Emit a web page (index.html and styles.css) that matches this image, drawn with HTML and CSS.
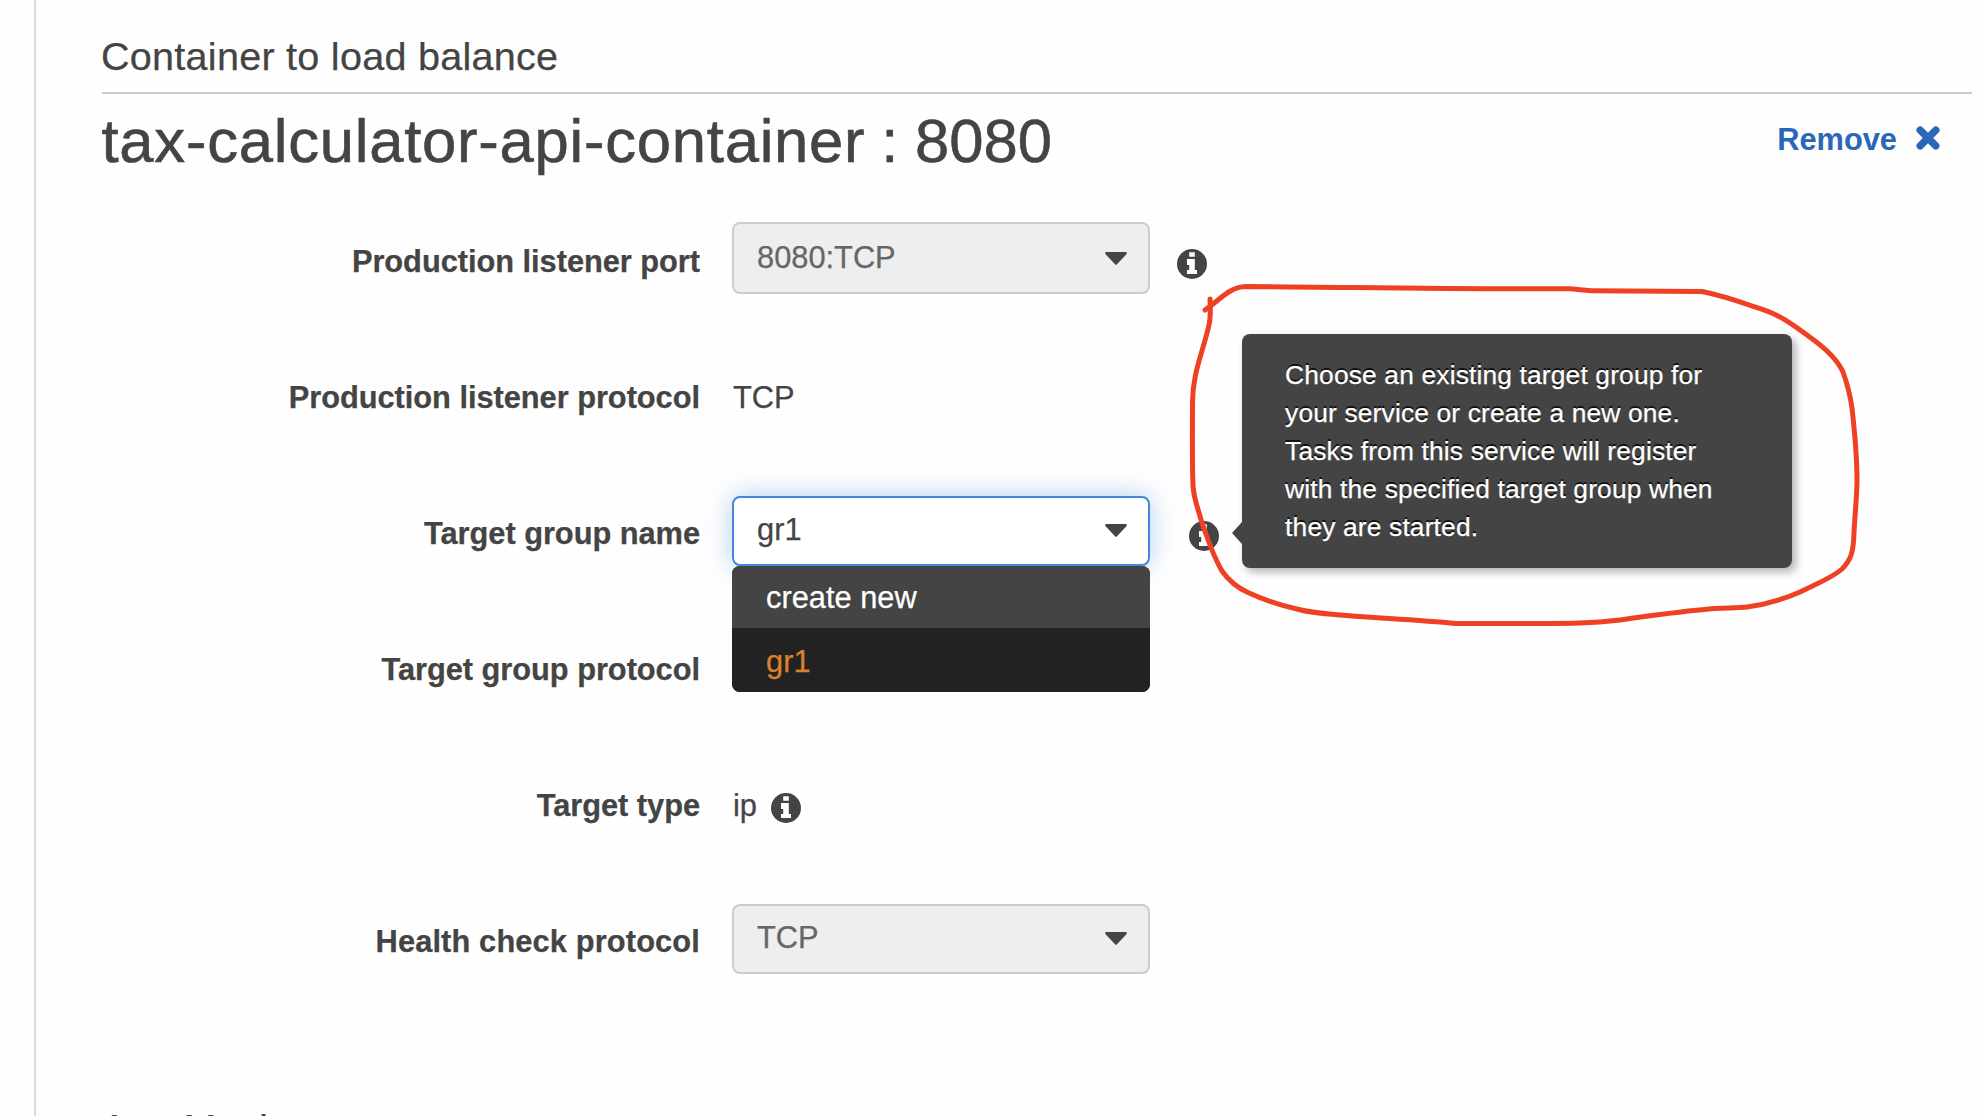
FILE: index.html
```
<!DOCTYPE html>
<html lang="en">
<head>
<meta charset="utf-8">
<title>Container to load balance</title>
<link rel="stylesheet" href="styles.css">
</head>
<body>
<svg class="defs" width="0" height="0" aria-hidden="true">
  <symbol id="info" viewBox="0 0 30 30">
    <circle cx="15" cy="15" r="15" fill="#444"/>
    <path fill="#fff" d="M12.2 3.2h5.6v4.6h-5.6zM10 10h7.8v11H20v4H10v-4h2.2v-5H10z"/>
  </symbol>
  <symbol id="caret" viewBox="0 0 22 13">
    <path fill="#444" d="M1.2 0h19.6q1.8.6.6 2.2L12 12.2q-1 1-2 0L.6 2.2Q-.6.6 1.2 0z"/>
  </symbol>
</svg>
<main class="panel">
  <h2 class="section-title">Container to load balance</h2>
  <div class="container-head">
    <h1 class="container-name">tax-calculator-api-container : <span class="port">8080</span></h1>
    <a class="remove">Remove
      <svg class="cross" viewBox="0 0 24 24"><path d="M4.2 4.2l15.6 15.6M19.8 4.2L4.2 19.8" stroke="#2b67b8" stroke-width="7.4" stroke-linecap="round"/></svg>
    </a>
  </div>
  <div class="form">
    <div class="row">
      <label class="label">Production listener port</label>
      <div class="select disabled tall"><span>8080:TCP</span><svg class="caret"><use href="#caret"/></svg></div>
      <svg class="info"><use href="#info"/></svg>
    </div>
    <div class="row">
      <label class="label">Production listener protocol</label>
      <span class="value">TCP</span>
    </div>
    <div class="row">
      <label class="label">Target group name</label>
      <div class="select focused"><span>gr1</span><svg class="caret"><use href="#caret"/></svg>
        <ul class="menu">
          <li class="option">create new</li>
          <li class="option selected">gr1</li>
        </ul>
      </div>
      <div class="hint">
        <svg class="info"><use href="#info"/></svg>
        <div class="tooltip">Choose an existing target group for<br>your service or create a new one.<br>Tasks from this service will register<br>with the specified target group when<br>they are started.</div>
      </div>
    </div>
    <div class="row">
      <label class="label">Target group protocol</label>
    </div>
    <div class="row">
      <label class="label">Target type</label>
      <span class="value">ip</span>
      <svg class="info after-text"><use href="#info"/></svg>
    </div>
    <div class="row">
      <label class="label spaced">Health check protocol</label>
      <div class="select disabled"><span>TCP</span><svg class="caret"><use href="#caret"/></svg></div>
    </div>
  </div>
  <h2 class="next-title">App Mesh</h2>
</main>
<svg class="annotation" viewBox="0 0 1982 1116">
  <path d="M1205 310C1222 298 1230 287 1246 286.500C1340 287 1440 289 1570 288.800C1576 289 1582 290.500 1592 290.700L1702 291.500C1720 295 1735 300 1752 306C1762 309 1769 311 1778 316C1790 322 1800 330 1811 338C1825 348 1838 361 1843 372C1847 383 1850 394 1852 408C1854 426 1857 460 1857 480C1857 496 1855 512 1854 533C1853.500 552 1851 560 1842 569C1832 578 1818 583 1800 592C1782 600 1762 605 1747 607C1735 608.500 1721 607.500 1704 609.500C1676 612 1648 616 1620 620C1590 623.500 1570 623.500 1540 623.500H1456C1420 620 1385 618.500 1352 616C1330 614 1310 613 1297 609C1278 605 1262 599 1248 592.500C1238 588 1229 581 1222 571C1212 554 1208 539 1202 523C1198 508 1194 500 1193 486C1192 460 1192.500 430 1192.500 405C1192 374 1203 352 1209 325C1211 316 1210.500 308 1210 299"/>
</svg>
</body>
</html>
```
FILE: styles.css
```
* { box-sizing: border-box; }

body {
  margin: 0;
  height: 1116px;
  overflow: hidden;
  position: relative;
  background: #fefefe;
  color: #444;
  font: 30.8px/40px "Liberation Sans", Arial, sans-serif;
  -webkit-text-stroke: 0.25px currentColor;
}

.defs { position: absolute; }

.panel {
  margin-left: 34px;
  height: 1116px;
  overflow: hidden;
  border-left: 2px solid #ddd;
  padding: 30px 10px 0 66px;
}

.section-title,
.next-title {
  margin: 0;
  font-size: 39.6px;
  line-height: 52px;
  font-weight: 400;
  letter-spacing: 0.25px;
  text-indent: -1px;
}

.section-title {
  height: 64px;
  border-bottom: 2px solid #ccc;
}

.container-head {
  display: flex;
  justify-content: space-between;
  height: 110px;
  padding-right: 32px;
}

.container-name {
  margin: 0;
  padding-top: 7px;
  font-size: 61.6px;
  line-height: 80px;
  font-weight: 400;
  letter-spacing: 0.75px;
  word-spacing: -2px;
  text-indent: -0.5px;
  -webkit-text-stroke-width: 0.6px;
}

.port { letter-spacing: 0; }

.remove {
  display: flex;
  gap: 19px;
  padding-top: 26px;
  font-weight: 700;
  color: #2b67b8;
  -webkit-text-stroke-width: 0;
}

.cross {
  width: 24px;
  height: 24px;
  margin-top: 6px;
  fill: none;
}

.row {
  display: flex;
  height: 136px;
}

.label {
  width: 598px;
  margin-right: 32px;
  padding-top: 38px;
  text-align: right;
  font-weight: 700;
  letter-spacing: -0.04px;
}

.label.spaced { letter-spacing: 0.13px; }

.value { padding: 38px 0 0 1px; }

.select {
  position: relative;
  display: flex;
  justify-content: space-between;
  width: 418px;
  height: 70px;
  margin-top: 20px;
  padding: 12px 21px 0 23px;
  border: 2px solid #ccc;
  border-radius: 8px;
  background: #fff;
}

.select.disabled {
  background: #eee;
  color: #666;
}

.select.tall {
  height: 72px;
  margin-top: 18px;
  padding-top: 14px;
}

.select.focused {
  border-color: #4488dd;
  box-shadow: 0 0 26px rgba(68, 136, 221, 0.4);
}

.caret {
  width: 22px;
  height: 13px;
  margin-top: 14px;
}

.menu {
  position: absolute;
  top: 68px;
  left: -2px;
  width: 418px;
  margin: 0;
  padding: 0;
  list-style: none;
  border-radius: 8px;
  overflow: hidden;
  background: #222;
}

.option {
  height: 62px;
  padding: 12px 34px 0;
  background: #444;
  color: #fff;
}

.option.selected {
  height: 64px;
  padding-top: 14px;
  background: #222;
  color: #d9822b;
}

.info {
  flex: none;
  width: 30px;
  height: 30px;
  margin: 45px 0 0 27px;
}

.info.after-text { margin-left: 14px; }

.hint {
  position: relative;
  padding-left: 12px;
}

.tooltip {
  position: absolute;
  left: 91.6px;
  top: -142px;
  width: 550px;
  height: 234px;
  padding: 22px 43.5px;
  border-radius: 8px;
  background: #444;
  color: #fff;
  font-size: 26.4px;
  line-height: 38px;
  letter-spacing: 0.14px;
  white-space: nowrap;
  text-shadow: 0 -2px 0 #111;
  box-shadow: 4px 4px 8px rgba(0, 0, 0, 0.3);
}

.tooltip::before {
  content: "";
  position: absolute;
  left: -10px;
  top: 188px;
  border: solid transparent;
  border-width: 11px 10px 11px 0;
  border-right-color: #444;
}

.next-title { margin-top: 82px; }

.annotation {
  position: absolute;
  inset: 0;
  width: 1982px;
  height: 1116px;
  fill: none;
  stroke: #ee4023;
  stroke-width: 5;
  stroke-linecap: round;
  stroke-linejoin: round;
  pointer-events: none;
}
```
